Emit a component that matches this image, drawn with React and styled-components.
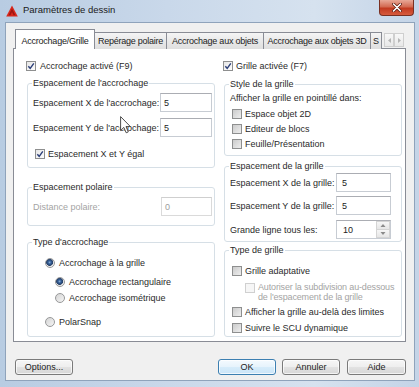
import React from "react";
import styled, { createGlobalStyle } from "styled-components";

const Global = createGlobalStyle`
  html, body { margin: 0; padding: 0; background: #c8d8ea; }
  body {
    font-family: "Liberation Sans", Arial, sans-serif;
    font-size: 9px;
    color: #2a2a2a;
  }
  * { box-sizing: border-box; }
`;

const Window = styled.div`
  position: relative;
  width: 419px;
  height: 387px;
  display: flex;
  flex-direction: column;
  padding-bottom: 6px;
  background: linear-gradient(to right, #b8cce2 0%, #c9d8ea 40%, #d6e2ef 75%, #c4d4e7 100%);
  overflow: hidden;
`;

const TitleBar = styled.div`
  height: 22px;
  flex: none;
  display: flex;
  align-items: flex-start;
  padding-left: 6px;
`;

const TitleIcon = styled.svg`
  margin-top: 5px;
  flex: none;
`;

const TitleText = styled.div`
  margin-left: 5px;
  margin-top: 4px;
  font-size: 9.5px;
  line-height: 12px;
  color: #1a1a1a;
`;

const CloseButton = styled.div`
  margin-left: auto;
  margin-right: 5px;
  width: 35px;
  height: 16px;
  border: 1px solid #7a3022;
  border-top: none;
  border-radius: 0 0 4px 4px;
  background: linear-gradient(#e8a897, #d36a52 45%, #c23a20 55%, #d65b3e);
  display: flex;
  align-items: center;
  justify-content: center;
`;

const Client = styled.div`
  flex: 1;
  margin: 0 4px 0 5px;
  border: 1px solid #8fa3bb;
  background: #f0f0f0;
  padding: 6px 8px 0 7px;
  display: flex;
  flex-direction: column;
`;

const TabStrip = styled.div`
  display: flex;
  align-items: flex-end;
  height: 20px;
  margin-bottom: -1px;
  padding-left: 2px;
`;

const Tab = styled.div`
  flex: none;
  width: ${(p) => p.$w}px;
  height: ${(p) => (p.$active ? 20 : 17)}px;
  border: 1px solid #898c95;
  border-bottom: none;
  margin-right: -1px;
  background: ${(p) =>
    p.$active ? "#ffffff" : "linear-gradient(#f5f5f5, #e9e9e9 50%, #dfdfdf)"};
  position: relative;
  z-index: ${(p) => (p.$active ? 2 : 0)};
  display: flex;
  align-items: center;
  justify-content: ${(p) => (p.$clip ? "flex-start" : "center")};
  padding-left: ${(p) => (p.$clip ? 2 : 0)}px;
  padding-top: ${(p) => (p.$active ? 3 : 0)}px;
  line-height: 12px;
  letter-spacing: -0.25px;
  white-space: nowrap;
  overflow: hidden;
  color: #222;
`;

const ScrollBtns = styled.div`
  display: flex;
  margin-left: 3px;
  margin-bottom: 2px;
`;

const ScrollBtn = styled.div`
  width: 10px;
  height: 14px;
  border: 1px solid #cfcfcf;
  background: linear-gradient(#f8f8f8, #e8e8e8);
  display: flex;
  align-items: center;
  justify-content: center;
`;

const Panel = styled.div`
  height: 294px;
  flex: none;
  border: 1px solid #898c95;
  background: #fff;
  display: grid;
  grid-template-columns: 188px 178px;
  column-gap: 9px;
  padding: 11px 3px 0 13px;
  align-content: start;
  align-items: start;
`;

const Column = styled.div`
  display: flex;
  flex-direction: column;
`;

const Group = styled.div`
  border: 1px solid #d6dfe6;
  border-radius: 3px;
  margin-top: ${(p) => p.$mt}px;
  padding: 0 ${(p) => p.$pr}px ${(p) => p.$pb}px 5px;
  display: flex;
  flex-direction: column;
`;

const Legend = styled.div`
  align-self: flex-start;
  margin: -7px 0 0 -1px;
  padding: 0 1px;
  height: 12px;
  line-height: 12px;
  background: #fff;
  color: #2a2a2a;
  white-space: nowrap;
`;

const TextLine = styled.div`
  height: 12px;
  line-height: 12px;
  margin-top: ${(p) => p.$mt || 0}px;
  white-space: nowrap;
`;

const CheckRow = styled.div`
  display: flex;
  align-items: ${(p) => (p.$multi ? "flex-start" : "center")};
  gap: ${(p) => p.$gap ?? 3}px;
  min-height: 12px;
  line-height: ${(p) => (p.$multi ? 10 : 12)}px;
  margin-top: ${(p) => p.$mt || 0}px;
  margin-left: ${(p) => p.$ml || 0}px;
  color: ${(p) => (p.$disabled ? "#a4a4a4" : "inherit")};
  letter-spacing: ${(p) => (p.$multi ? "-0.15px" : "0")};
  white-space: nowrap;
`;

const Box = styled.span`
  width: 10px;
  height: 10px;
  flex: none;
  margin-top: ${(p) => (p.$multi ? 1 : 0)}px;
  border: 1px solid ${(p) => (p.$disabled ? "#d0d0d0" : "#8e8f8f")};
  background: ${(p) =>
    p.$disabled
      ? "#f6f6f6"
      : p.$checked
      ? "linear-gradient(135deg, #e6e6e6, #fdfdfd)"
      : "linear-gradient(135deg, #cbcbcb, #eeeeee)"};
  display: flex;
  align-items: center;
  justify-content: center;
`;

const RadioDot = styled.span`
  width: 10px;
  height: 10px;
  flex: none;
  border-radius: 50%;
  border: 1px solid #979899;
  background: ${(p) =>
    p.$on
      ? "radial-gradient(circle at 45% 42%, #8fb2d8 0, #35609a 1.5px, #263f66 3.2px, #e8e8e8 3.8px, #f7f7f7 5px)"
      : "linear-gradient(135deg, #d4d4d4, #f5f5f5)"};
`;

const FieldRow = styled.div`
  display: grid;
  grid-template-columns: ${(p) => p.$lw}px ${(p) => p.$iw}px;
  align-items: center;
  margin-top: ${(p) => p.$mt}px;
  white-space: nowrap;
  color: ${(p) => (p.$disabled ? "#a4a4a4" : "inherit")};
`;

const Input = styled.div`
  height: 19px;
  border: 1px solid ${(p) => (p.$disabled ? "#dadada" : "#c7ccd3")};
  border-top-color: ${(p) => (p.$disabled ? "#cfcfcf" : "#abadb3")};
  background: #fff;
  display: flex;
  align-items: center;
  padding-left: ${(p) => p.$pl}px;
  color: ${(p) => (p.$disabled ? "#9c9c9c" : "#222")};
`;

const InputValue = styled.span`
  flex: 1;
`;

const Spin = styled.div`
  width: 14px;
  height: 100%;
  display: flex;
  flex-direction: column;
`;

const SpinHalf = styled.div`
  flex: 1;
  border: 1px solid #d4d4d4;
  background: linear-gradient(#f6f6f6, #e6e6e6);
  display: flex;
  align-items: center;
  justify-content: center;
  & + & { border-top: none; }
`;

const ButtonRow = styled.div`
  display: flex;
  margin-top: 17px;
  padding-left: 2px;
`;

const Button = styled.div`
  width: ${(p) => p.$w}px;
  height: 16px;
  flex: none;
  margin-left: ${(p) => (p.$auto ? "auto" : `${p.$ml || 0}px`)};
  border: 1px solid ${(p) => (p.$primary ? "#3c7fb1" : "#7a7a7a")};
  border-radius: 3px;
  background: ${(p) =>
    p.$primary
      ? "linear-gradient(#f4fafe, #e6f3fc 50%, #d6ecfa 51%, #cbe5f8)"
      : "linear-gradient(#f6f6f6, #eeeeee 50%, #e2e2e2 51%, #d7d7d7)"};
  box-shadow: inset 0 0 0 1px rgba(255, 255, 255, 0.7);
  display: flex;
  align-items: center;
  justify-content: center;
  color: #222;
`;

const Cursor = styled.svg`
  position: absolute;
  left: 120px;
  top: 116px;
  pointer-events: none;
`;

const Check = () => (
  <svg width="8" height="8" viewBox="0 0 8 8">
    <path d="M1.3 4.2 L3.2 6.3 L6.8 1.4" fill="none" stroke="#2c3f78" strokeWidth="1.4" />
  </svg>
);

const CheckBox = ({ checked, disabled, multi }) => (
  <Box $checked={checked} $disabled={disabled} $multi={multi}>
    {checked && <Check />}
  </Box>
);

const Tri = ({ dir, color = "#8a8a8a" }) => {
  const pts = {
    left: "4,1 1,3.5 4,6",
    right: "1,1 4,3.5 1,6",
    up: "0.5,4 3,1 5.5,4",
    down: "0.5,1 3,4 5.5,1",
  }[dir];
  const w = dir === "up" || dir === "down" ? 6 : 5;
  const h = dir === "up" || dir === "down" ? 5 : 7;
  return (
    <svg width={w} height={h} viewBox={`0 0 ${w} ${h}`}>
      <polygon points={pts} fill={color} />
    </svg>
  );
};

export default function App() {
  return (
    <>
      <Global />
      <Window>
        <TitleBar>
          <TitleIcon width="12" height="12" viewBox="0 0 12 12">
            <polygon points="6,0.5 11.8,11.5 0.2,11.5" fill="#d8281c" />
            <polygon points="6,3.5 9.4,10.3 7.6,10.3 6,7 4.4,10.3 2.6,10.3" fill="#a11610" />
          </TitleIcon>
          <TitleText>Paramètres de dessin</TitleText>
          <CloseButton>
            <svg width="10" height="9" viewBox="0 0 10 9">
              <path d="M1.5 1 L8.5 8 M8.5 1 L1.5 8" stroke="#5a1a10" strokeWidth="3" strokeLinecap="round" />
              <path d="M1.5 1 L8.5 8 M8.5 1 L1.5 8" stroke="#ffffff" strokeWidth="1.6" strokeLinecap="round" />
            </svg>
          </CloseButton>
        </TitleBar>

        <Client>
          <TabStrip>
            <Tab $active $w={80}>Accrochage/Grille</Tab>
            <Tab $w={73}>Repérage polaire</Tab>
            <Tab $w={98}>Accrochage aux objets</Tab>
            <Tab $w={108}>Accrochage aux objets 3D</Tab>
            <Tab $w={12} $clip>S</Tab>
            <ScrollBtns>
              <ScrollBtn><Tri dir="left" color="#b5b5b5" /></ScrollBtn>
              <ScrollBtn><Tri dir="right" color="#b5b5b5" /></ScrollBtn>
            </ScrollBtns>
          </TabStrip>

          <Panel>
            <Column>
              <CheckRow $gap={4} $ml={-1}>
                <CheckBox checked />
                <span>Accrochage activé (F9)</span>
              </CheckRow>

              <Group $mt={11} $pb={7} $pr={2}>
                <Legend>Espacement de l'accrochage</Legend>
                <FieldRow $mt={4} $lw={127} $iw={52}>
                  <span>Espacement X de l'accrochage:</span>
                  <Input $pl={3}><InputValue>5</InputValue></Input>
                </FieldRow>
                <FieldRow $mt={6} $lw={127} $iw={52}>
                  <span>Espacement Y de l'accrochage:</span>
                  <Input $pl={3}><InputValue>5</InputValue></Input>
                </FieldRow>
                <CheckRow $mt={11} $ml={2}>
                  <CheckBox checked />
                  <span>Espacement X et Y égal</span>
                </CheckRow>
              </Group>

              <Group $mt={19} $pb={9} $pr={2}>
                <Legend>Espacement polaire</Legend>
                <FieldRow $mt={4} $lw={128} $iw={51} $disabled>
                  <span>Distance polaire:</span>
                  <Input $pl={3} $disabled><InputValue>0</InputValue></Input>
                </FieldRow>
              </Group>

              <Group $mt={16} $pb={8} $pr={2}>
                <Legend>Type d'accrochage</Legend>
                <CheckRow $mt={9} $ml={12} $gap={4}>
                  <RadioDot $on />
                  <span>Accrochage à la grille</span>
                </CheckRow>
                <CheckRow $mt={7} $ml={22} $gap={4}>
                  <RadioDot $on />
                  <span>Accrochage rectangulaire</span>
                </CheckRow>
                <CheckRow $mt={4} $ml={22} $gap={4}>
                  <RadioDot />
                  <span>Accrochage isométrique</span>
                </CheckRow>
                <CheckRow $mt={12} $ml={12} $gap={4}>
                  <RadioDot />
                  <span>PolarSnap</span>
                </CheckRow>
              </Group>
            </Column>

            <Column>
              <CheckRow $gap={3} $ml={-1}>
                <CheckBox checked />
                <span>Grille activée (F7)</span>
              </CheckRow>

              <Group $mt={12} $pb={5} $pr={2}>
                <Legend>Style de la grille</Legend>
                <TextLine $mt={2}>Afficher la grille en pointillé dans:</TextLine>
                <CheckRow $mt={4} $ml={2}>
                  <CheckBox />
                  <span>Espace objet 2D</span>
                </CheckRow>
                <CheckRow $mt={3} $ml={2}>
                  <CheckBox />
                  <span>Editeur de blocs</span>
                </CheckRow>
                <CheckRow $mt={3} $ml={2}>
                  <CheckBox />
                  <span>Feuille/Présentation</span>
                </CheckRow>
              </Group>

              <Group $mt={10} $pb={2} $pr={10}>
                <Legend>Espacement de la grille</Legend>
                <FieldRow $mt={1} $lw={106} $iw={55}>
                  <span>Espacement X de la grille:</span>
                  <Input $pl={5}><InputValue>5</InputValue></Input>
                </FieldRow>
                <FieldRow $mt={4} $lw={106} $iw={55}>
                  <span>Espacement Y de la grille:</span>
                  <Input $pl={5}><InputValue>5</InputValue></Input>
                </FieldRow>
                <FieldRow $mt={5} $lw={106} $iw={55}>
                  <span>Grande ligne tous les:</span>
                  <Input $pl={6}>
                    <InputValue>10</InputValue>
                    <Spin>
                      <SpinHalf><Tri dir="up" /></SpinHalf>
                      <SpinHalf><Tri dir="down" /></SpinHalf>
                    </Spin>
                  </Input>
                </FieldRow>
              </Group>

              <Group $mt={8} $pb={2} $pr={2}>
                <Legend>Type de grille</Legend>
                <CheckRow $mt={9} $ml={2}>
                  <CheckBox />
                  <span>Grille adaptative</span>
                </CheckRow>
                <CheckRow $mt={5} $ml={15} $gap={3} $multi $disabled>
                  <CheckBox disabled multi />
                  <span>
                    Autoriser la subdivision au-dessous
                    <br />
                    de l'espacement de la grille
                  </span>
                </CheckRow>
                <CheckRow $mt={4} $ml={2}>
                  <CheckBox />
                  <span>Afficher la grille au-delà des limites</span>
                </CheckRow>
                <CheckRow $mt={4} $ml={2}>
                  <CheckBox />
                  <span>Suivre le SCU dynamique</span>
                </CheckRow>
              </Group>
            </Column>
          </Panel>

          <ButtonRow>
            <Button $w={58}>Options...</Button>
            <Button $w={58} $auto $primary>OK</Button>
            <Button $w={58} $ml={6}>Annuler</Button>
            <Button $w={59} $ml={7}>Aide</Button>
          </ButtonRow>
        </Client>

        <Cursor width="12" height="18" viewBox="0 0 12 18">
          <path
            d="M0.6 0.6 L0.6 14.5 L3.8 11.4 L6.2 16.8 L8.3 15.9 L6 10.6 L10.4 10.6 Z"
            fill="#ffffff"
            stroke="#3a3a3a"
            strokeWidth="0.9"
            strokeLinejoin="round"
          />
        </Cursor>
      </Window>
    </>
  );
}
